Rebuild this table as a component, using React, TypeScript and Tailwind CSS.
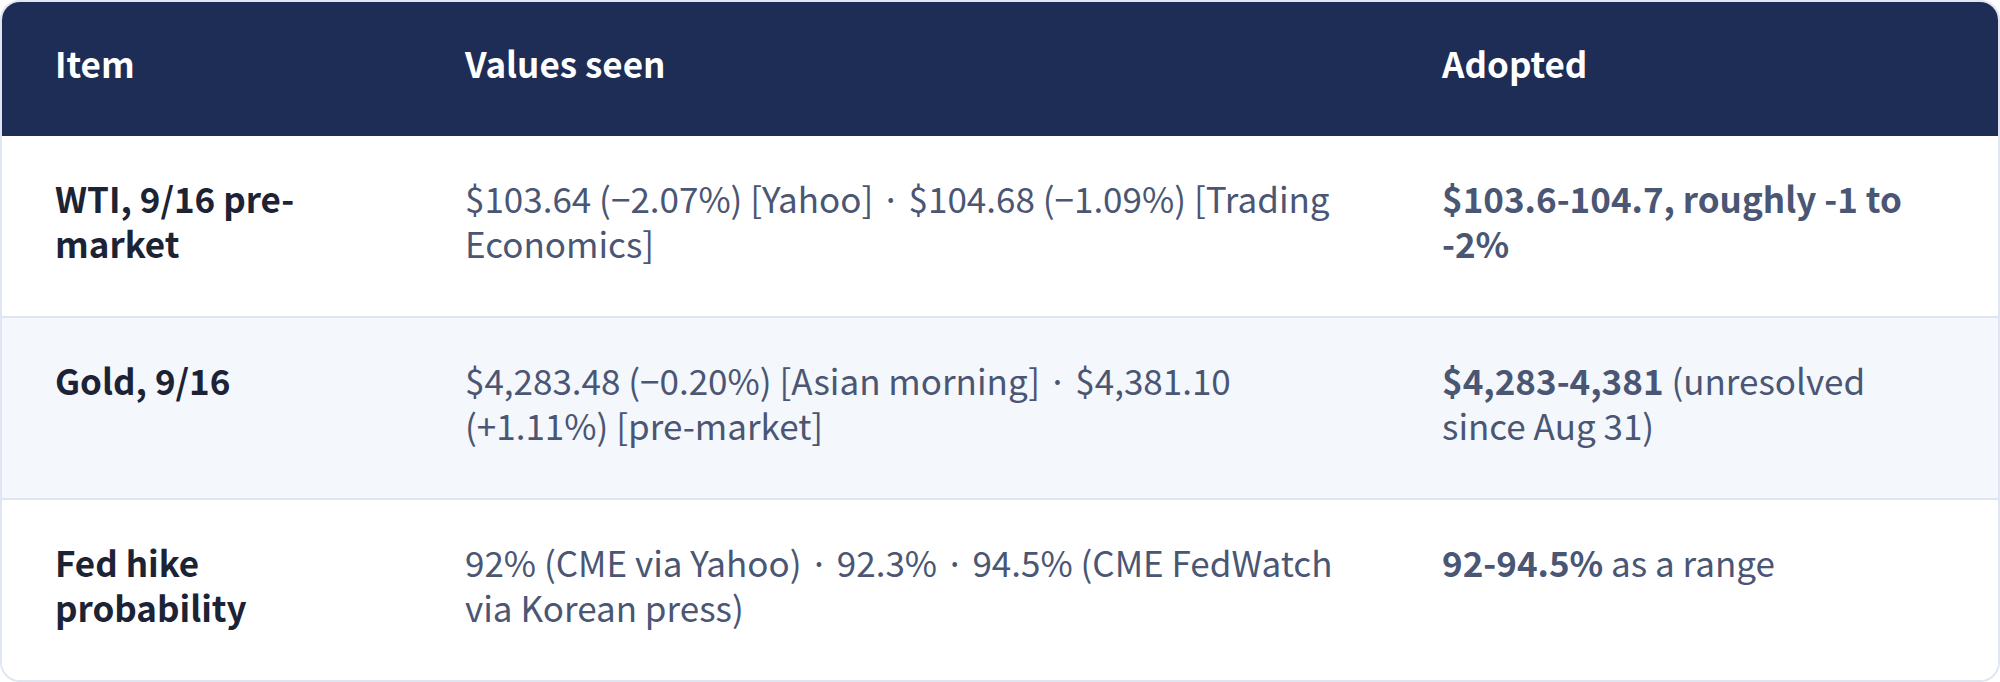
const rows = [
  {
    item: "WTI, 9/16 pre-market",
    seen: "$103.64 (−2.07%) [Yahoo] · $104.68 (−1.09%) [Trading Economics]",
    bold: "$103.6-104.7, roughly -1 to -2%",
    rest: "",
  },
  {
    item: "Gold, 9/16",
    seen: "$4,283.48 (−0.20%) [Asian morning] · $4,381.10 (+1.11%) [pre-market]",
    bold: "$4,283-4,381",
    rest: " (unresolved since Aug 31)",
  },
  {
    item: "Fed hike probability",
    seen: "92% (CME via Yahoo) · 92.3% · 94.5% (CME FedWatch via Korean press)",
    bold: "92-94.5%",
    rest: " as a range",
  },
];

export default function App() {
  return (
    <div
      className="w-[2000px] h-[682px] bg-white"
      style={{ fontFamily: '"Noto Sans CJK KR", "Noto Sans", sans-serif' }}
    >
      <div className="overflow-hidden rounded-[20px] border-2 border-[#dfe6f1]">
        <table className="w-full table-fixed border-collapse text-[35px] leading-[45px]">
          <colgroup>
            <col className="w-[410px]" />
            <col className="w-[977px]" />
            <col />
          </colgroup>
          <thead>
            <tr className="bg-[#1e2d55] text-left text-white">
              <th className="px-[53px] pt-[38px] pb-[51px] font-bold">Item</th>
              <th className="px-[53px] pt-[38px] pb-[51px] font-bold">Values seen</th>
              <th className="px-[53px] pt-[38px] pb-[51px] font-bold">Adopted</th>
            </tr>
          </thead>
          <tbody>
            {rows.map((r, i) => (
              <tr
                key={r.item}
                className={
                  (i % 2 === 1 ? "bg-[#f4f7fc] " : "bg-white ") +
                  (i < rows.length - 1 ? "border-b-2 border-[#dfe6f1]" : "")
                }
              >
                <td className="px-[53px] pt-[39px] pb-[51px] align-top font-bold text-[#1b2335]">{r.item}</td>
                <td className="px-[53px] pt-[39px] pb-[51px] align-top text-[#4a5673]">{r.seen}</td>
                <td className="px-[53px] pt-[39px] pb-[51px] align-top text-[#4a5673]">
                  <span className="font-bold">{r.bold}</span>
                  {r.rest}
                </td>
              </tr>
            ))}
          </tbody>
        </table>
      </div>
    </div>
  );
}
